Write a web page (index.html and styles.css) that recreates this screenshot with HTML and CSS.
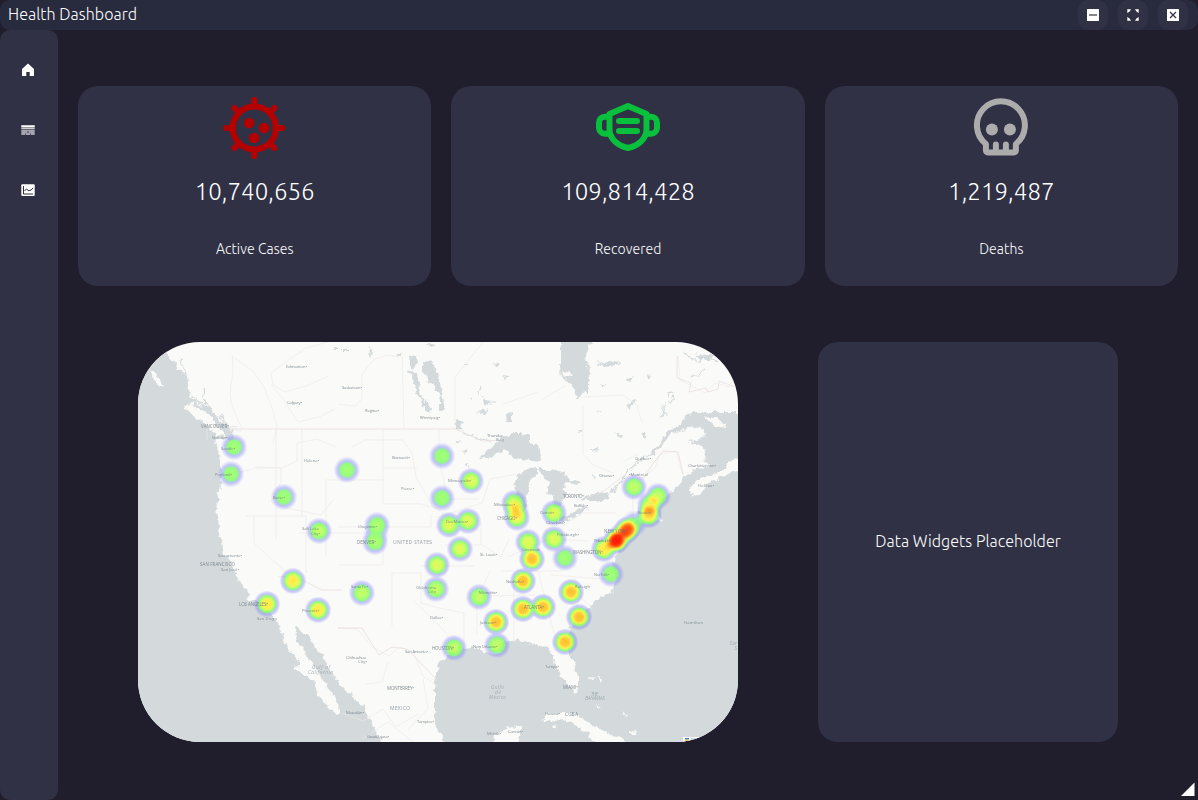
FILE: index.html
```html
<!DOCTYPE html>
<html lang="en">
<head>
<meta charset="utf-8">
<title>Health Dashboard</title>
<link rel="stylesheet" href="styles.css">
</head>
<body>
<header class="titlebar">
  <h1 class="title">Health Dashboard</h1>
  <div class="controls">
    <button class="control" aria-label="Minimize"><svg width="12" height="12" viewBox="0 0 12 12"><rect width="12" height="12" rx=".6" fill="#fff"/><path d="M2 6h8" stroke="#85868f" stroke-width="2"/></svg></button>
    <button class="control" aria-label="Maximize"><svg width="12" height="12" viewBox="0 0 12 12" fill="#fff"><path d="M.3.3H4L2.800 2.200 2.200 2.800.3 4zM11.700.3H8l1.200 1.900.6.6L11.700 4zM.3 11.700H4L2.800 9.800 2.200 9.200.3 8zM11.700 11.700H8l1.200-1.900.6-.6L11.700 8z"/></svg></button>
    <button class="control" aria-label="Close"><svg width="12" height="12" viewBox="0 0 12 12"><rect width="12" height="12" rx=".6" fill="#fff"/><path d="M3 3l6 6M9 3L3 9" stroke="#33344a" stroke-width="1.300"/></svg></button>
  </div>
</header>
<div class="body">
  <nav class="sidebar">
    <a class="nav"><svg width="14" height="14" viewBox="0 0 14 14"><path d="M7 .5L13 6v7H8.700V9H5.300v4H1V6z" fill="#fff"/></svg></a>
    <a class="nav"><svg width="14" height="14" viewBox="0 0 14 14"><path d="M.3 2.300h13.400v2.200H.3zM.3 5.300h13.400v1H.3z" fill="#fff"/><path d="M.3 7h13.400v5H.3z" fill="#a3a4ae"/><path d="M4 10.500h1V12H4zM9 10.500h1V12H9zM6.200 8.200h1.600v1.500H6.200z" fill="#4c4d5e"/></svg></a>
    <a class="nav"><svg width="14" height="14" viewBox="0 0 14 14" fill="none"><rect x=".3" y="1.300" width="13.400" height="11.600" rx="1" fill="#fff"/><path d="M2.500 3v8H12M3.500 8l2-2 2.500 2 1-1.200.8.600L12 5" stroke="#303145" stroke-width="1"/></svg></a>
  </nav>
  <main class="content">
    <section class="cards">
      <article class="card">
        <svg class="card-icon" viewBox="0 0 72 72"><g transform="translate(-.7)"><g fill="none" stroke="#b40000" stroke-width="6" stroke-linecap="round"><circle cx="36" cy="36" r="21.500"/><path d="M36 14V8M36 58v6M14 36H8M58 36h6M20.500 20.500L16 16M51.500 20.500L56 16M20.500 51.500L16 56M51.500 51.500L56 56"/></g><g fill="#b40000"><circle cx="30.800" cy="31" r="5.200"/><circle cx="45.800" cy="36" r="5.200"/><circle cx="35.800" cy="46" r="5.200"/></g></g></svg>
        <p class="value">10,740,656</p>
        <p class="label">Active Cases</p>
      </article>
      <article class="card">
        <svg class="card-icon" viewBox="0 0 72 72"><g fill="none" stroke="#08c03c" stroke-width="6" stroke-linecap="round" stroke-linejoin="round"><path d="M36 14L54.500 22V37C54.500 46.500 47 53.500 36 56 25 53.500 17.500 46.500 17.500 37V22z"/><path d="M57 24.700h2a6 6 0 0 1 6 6v5a6 6 0 0 1-6 6h-4M15 24.700h-2a6 6 0 0 0-6 6v5a6 6 0 0 0 6 6h4M27 29h18M27 39h18"/></g></svg>
        <p class="value">109,814,428</p>
        <p class="label">Recovered</p>
      </article>
      <article class="card">
        <svg class="card-icon" viewBox="0 0 72 72"><g transform="translate(.4 .5)"><g fill="none" stroke="#acacac" stroke-width="6" stroke-linecap="round" stroke-linejoin="round"><path d="M20.500 58v-6.500a24 24 0 1 1 30 0V58a2 2 0 0 1-2 2h-26a2 2 0 0 1-2-2z"/><path d="M30.500 52v7M40.500 52v7"/></g><g fill="#acacac"><circle cx="26.500" cy="37" r="6"/><circle cx="44.500" cy="37" r="6"/></g></g></svg>
        <p class="value">1,219,487</p>
        <p class="label">Deaths</p>
      </article>
    </section>
    <section class="lower">
      <svg class="map" viewBox="0 0 600 400" role="img" aria-label="Heat map of cases in the United States">
        <defs>
          <radialGradient id="spot"><stop offset="0" stop-color="#000"/><stop offset=".31" stop-color="#000" stop-opacity=".95"/><stop offset=".46" stop-color="#000" stop-opacity=".83"/><stop offset=".62" stop-color="#000" stop-opacity=".53"/><stop offset=".78" stop-color="#000" stop-opacity=".2"/><stop offset="1" stop-color="#000" stop-opacity="0"/></radialGradient>
          <filter id="coast" filterUnits="userSpaceOnUse" x="-12" y="-12" width="624" height="424" color-interpolation-filters="sRGB">
            <feTurbulence type="fractalNoise" baseFrequency=".16" numOctaves="3" seed="4"/>
            <feDisplacementMap in="SourceGraphic" scale="7" xChannelSelector="R" yChannelSelector="G"/>
          </filter>
          <filter id="heat" filterUnits="userSpaceOnUse" x="0" y="0" width="600" height="400" color-interpolation-filters="sRGB">
            <feColorMatrix values="0 0 0 1 0  0 0 0 1 0  0 0 0 1 0  0 0 0 1 0"/>
            <feComponentTransfer>
              <feFuncR type="table" tableValues=".45 .45 .5 .48 .57 .8 1 1 1 1 1"/>
              <feFuncG type="table" tableValues=".45 .45 .6 .98 1 1 .93 .74 .5 .2 0"/>
              <feFuncB type="table" tableValues="1 1 .9 .45 .38 .3 .22 .14 .08 .03 0"/>
              <feFuncA type="table" tableValues="0 .35 .5 .82 .86 .88 .9 .93 .95 .98 1"/>
            </feComponentTransfer>
          </filter>
          <circle id="s" r="13.500" fill="url(#spot)"/>
        </defs>
        <rect width="600" height="400" fill="#fafaf8"/>
        <g class="water" filter="url(#coast)">
          <path d="M-12 -12H12L20 12 27 9 31 17 37 20 41 28 49 35 51 47 52 56 61 63 73 66 79 77 89 83 94 90 96 100 89 96 76 97 80 108 83 123 82 140 79 165 81 185 80 190 84 200 86 213 93 220 98 232 101 240 109 248 111 257 121 260 130 270 138 278 143 290 149 305 163 320 163 324 156 325 170 335 179 345 180 354 188 362 198 372 202 370 200 362 190 345 182 332 178 327 172 320 165 307 160 300 157 285 165 290 171 293 176 306 185 312 190 325 200 340 207 347 225 364 233 380 242 397 246 412H-12z"/>
          <path d="M300 320L307 317 315 308 325 307 335 306 350 310 355 313 365 310 357 303 366 300 380 298 390 300 403 304 410 305 416 314 420 330 430 343 437 351 440 347 440 335 436 322 430 310 429 296 432 285 440 277 449 266 457 260 465 253 473 251 477 243 478 232 475 222 480 210 482 194 490 181 508 178 523 180 518 168 524 158 533 150 540 145 545 136 553 130 563 127 575 124 567 119 565 105 555 100 562 96 568 92 565 86 550 85 533 92 520 108 516 113 514 109 530 90 543 82 546 74 556 70H612V412H377L383 387 379 384 365 388 356 392 355 412H309L304 393 297 384V340z"/>
          <path d="M422 -10V25L424 35 433 42 437 50 441 57 445 50 450 52 450 42 452 32 448 15 449 8 455 0V-10zM342 116L350 108 362 98 375 91 384 91 391 94 391 100 400 103 404 113 402 120 385 118 373 115 371 109 362 110 350 116zM375 143L382 131 392 126 400 125 400 132 392 138 389 150 388 165 383 175 377 172 376 155 379 145zM400 127L413 127 425 130 433 138 442 141 437 143 430 140 425 145 428 152 423 165 417 165 416 153 408 152 412 141 403 131zM420 176L435 170 450 163 447 168 438 175 425 180zM443 158L452 152 462 152 471 150 470 156 460 159 447 159zM285 20L293 19 298 27 302 40 304 50 307 67 302 68 302 55 297 45 288 37 285 30zM270 30L279 31 281 48 287 60 293 66 292 71 287 68 284 59 279 50 277 40zM271 14L277 13 279 22 275 29zM368 71L374 70V80L369 81zM317 80L325 79 324 87 317 88zM460 22L470 20 483 21 478 24 465 25zM489 65L497 57 499 58 490 67zM558 12L566 15 576 10 572 18 562 18zM232 4l3 6-4 5zM195 8l4-4v4z"/>
          <path d="M205 7h4v3h-4zM230 11l4 2-2 4zM258 12h5l-2 3zM289 2h7l-2 3zM326 21h3l-1 3zM355 20l7 2-4 2zM366 33l5 1-3 2zM332 57h3v3zM344 51l4 9 7 1-8 2zM337 70l13-2-4 4zM317 99l7 1-6 2zM323 109l6-3-3 6zM329 122h3l-2 3zM459 69h5l-2 3zM462 41h4l-1 4zM439 88h7l-4 3zM478 92h7l-2 4zM503 92h5l-2 3zM454 107h5l-1 4zM525 62l-2 14 3-2zM488 36l7-1-2 4zM510 31l4 3-3 3zM453 132l6 4-2 2zM432 371l3-2 1 4z"/>
          <g class="lake-line"><path d="M27 10l8 19 8 3-4 8 13 9-4 8 19 4-2-14M52 52l16 15-1-9 11 19 7-3 4 11 9 0M35 25l12 7-5-16M43 42l8-4M271 30l7 2 3 12M341 52l1-8M347 60l10 0M340 69l10-1M319 77l6 15 9 2 19 5M547 12l13 8 9-5 10 4M553 36l15-8M528 73l-2-14M530 55a3 3 0 1 1 5 0 3 3 0 1 1-5 0M460 20l10 2 11-1M470 155l13-16 17-20 17-9M542 142l9-7M568 128l22-17 10 1M550 100l17 1"/></g>
          <g class="land">
            <path d="M47 63L54 61 63 68 72 71 77 84 87 90 87 94 79 93 72 88 60 77 51 71zM13 27L19 34 24 42 26 46 18 42 15 34zM567 75L576 76 588 83 589 86 580 85 570 80zM424 30L430 29 435 34 433 36 426 34z"/>
            <path d="M552 147L556 155 564 150 570 142 582 136 593 130 612 128V113L591 120 588 128 579 130 570 134 557 139zM405 379L408 374 415 370 428 370 440 374 452 380 459 386 468 389 475 394 487 397 486 410H466L456 399 450 390 440 386 435 381 423 376 413 379zM355 410L358 392 369 387 383 385 383 390 378 410zM416 382l4 2-2 3-3-2zM492 390l7-1-2 3-5 0zM449 337l9-2-3 3zM459 334l5 3-1 4zM458 361l3 2-1 2zM484 370l4 3-2 1z"/>
          </g>
        </g>
        <path class="road" d="M94 13q2 13-1 30t7 35-7 7M95 15l20 14 12 18 8 22 4 16-4 17M190 0l-22 6-19 13-16 12 2 12 12 7 24-7 19-9M133 43l13 15 14 22 21-5 16-8M198 105l-19-8-20 4 0 18-15 7-27-1M90 145l13-15 15-4 25 0 0 14-10 20 20 7 30 6 12-15M138 87v110M164 87v88M69 98V80M200 62l17 2 7-7 0-25 12-15 14-4 10 2M264 10L266 87M317 87V35L345 0M245 88V162M245 126h34M245 162h38l18 5M188 138h57M188 138v76M200 185h45v38H200M108 174h60v57M116 174v27l35 32M161 191h84M245 185h48v-12M254 231v53M200 286l19 1 15 18 17 9 10-9 14 4 10 25 15 10M254 231h29v30l18 5 25 5v36M283 224h53M292 257l13-4M275 258l29 28 17 24M300 175l44-14 8-24 28-5M307 157h34M307 203h36M343 180v22l20 13 8-18M352 229l-13 29 0 34M364 229h60M376 229v70M400 229l16 62M350 254l47-1M370 215l41-18 39 2M423 185l22-14 33 0M413 233l53 4M428 239l27 29M444 250l-13 35M445 64v48l9 10 22 10M445 55l40-2 14 10 5 18M485 120l15-8M495 135l0 43M498 140l19-14 5-14 16-3 7 25M540 14l2 24 25 13 10-10 15 4M403 58l24-14M365 62l35-12M214 105l13-7 38 0 9 13 4 24M301 88v30l7 30M278 135l17 30 23 14M285 337l5 30-20 20M205 371l20 8 20-12 13 18 22-13M224 397l26-17 25 20M250 320l-6 20-17 2"/>
        <path class="border" d="M91 87H317L345 99 365 98M140 235l16-1 28 14h20M157 235l-1 13M200 286l24 0 17 27 13-8 15 2 31 32M539 14v22l14 5-2 9 17-4 2 4 10-3 1-8 19 7M505 137l9-14 11-14 15 1 5 22M444 158l22-9 23-18"/>
        <g filter="url(#heat)">
          <g opacity=".41"><use href="#s" x="96" y="105"/><use href="#s" x="93" y="132"/><use href="#s" x="146" y="155"/><use href="#s" x="209" y="128"/><use href="#s" x="304" y="114"/><use href="#s" x="304" y="156"/><use href="#s" x="427" y="216"/><use href="#s" x="473" y="232"/></g>
          <g opacity=".48"><use href="#s" x="181" y="189"/><use href="#s" x="224" y="251"/><use href="#s" x="298" y="247"/><use href="#s" x="341" y="255"/><use href="#s" x="359" y="303"/><use href="#s" x="316" y="306"/><use href="#s" x="496" y="145"/></g>
          <g opacity=".43"><use href="#s" x="239" y="183"/><use href="#s" x="237" y="200"/><use href="#s" x="238" y="192" opacity=".35"/></g>
          <g opacity=".54"><use href="#s" x="333" y="139"/><use href="#s" x="311" y="183"/><use href="#s" x="330" y="179"/><use href="#s" x="322" y="207"/><use href="#s" x="299" y="223"/><use href="#s" x="416" y="171"/><use href="#s" x="416" y="197"/><use href="#s" x="390" y="200"/></g>
          <use href="#s" x="520" y="154" opacity=".47"/>
          <g opacity=".62"><use href="#s" x="155" y="239"/><use href="#s" x="129" y="262"/><use href="#s" x="180" y="268"/></g>
          <use href="#s" x="376" y="161" opacity=".5"/><use href="#s" x="379" y="176" opacity=".52"/><use href="#s" x="378" y="169" opacity=".3"/>
          <g opacity=".71"><use href="#s" x="394" y="217"/><use href="#s" x="385" y="239"/><use href="#s" x="385" y="267"/><use href="#s" x="405" y="265"/><use href="#s" x="358" y="280"/><use href="#s" x="433" y="250"/><use href="#s" x="441" y="275"/><use href="#s" x="427" y="300"/></g>
          <use href="#s" x="511" y="173" opacity=".65"/><use href="#s" x="512" y="163" opacity=".5"/><use href="#s" x="466" y="207" opacity=".62"/><use href="#s" x="478" y="199" opacity=".95"/><use href="#s" x="489" y="188" opacity=".84"/><use href="#s" x="483" y="194" opacity=".4"/><use href="#s" x="496" y="182" opacity=".3"/>
        </g>
        <g class="places">
          <text x="148" y="26" textLength="21">Edmonton•</text><text x="149" y="61.500" textLength="15">Calgary•</text><text x="204" y="46.500" textLength="20">Saskatoon•</text><text x="227" y="69.500" textLength="14">Regina•</text><text x="282" y="77" textLength="20">Winnipeg•</text><text x="349" y="95" textLength="16">Thunder</text><text x="358" y="99" textLength="8">Bay</text>
          <text class="big" x="63" y="86" textLength="28">VANCOUVER•</text><text x="74" y="97" textLength="15">Victoria•</text><text x="83" y="107.500" textLength="14">Seattle•</text><text x="77" y="134" textLength="17">Portland•</text><text x="166" y="120" textLength="15">Helena•</text><text x="135" y="157" textLength="12">Boise•</text><text x="164" y="188" textLength="17">Salt Lake</text><text x="173" y="192.500" textLength="9">City•</text><text x="254" y="117" textLength="18">Bismarck•</text><text x="263" y="147.500" textLength="13">Pierre•</text><text x="310" y="140" textLength="23">Minneapolis•</text><text x="220" y="185.500" textLength="19">Cheyenne•</text><text class="big" x="219" y="202" textLength="19">DENVER•</text><text class="country" x="255" y="202" textLength="39">UNITED STATES</text>
          <text x="308" y="181" textLength="22">Des Moines•</text><text x="356" y="164" textLength="21">Milwaukee•</text><text class="big" x="359" y="177.500" textLength="20">CHICAGO•</text><text x="342" y="214" textLength="17">St. Louis•</text><text x="402" y="172" textLength="14">Detroit•</text><text x="408" y="182" textLength="19">Cleveland•</text><text x="384" y="209" textLength="18">Cincinnati</text><text x="368" y="241" textLength="18">Nashville•</text><text x="419" y="194" textLength="22">Pittsburgh•</text><text x="436" y="165" textLength="14">Buffalo•</text><text class="big" x="425" y="156" textLength="21">TORONTO•</text><text x="461" y="135" textLength="15">Ottawa•</text><text x="491" y="133.500" textLength="19">•Montréal</text><text x="497" y="118" textLength="16">Québec•</text><text x="550" y="125" textLength="28">Charlottetown•</text><text x="560" y="144.500" textLength="16">Halifax•</text><text x="500" y="172" textLength="13">Boston</text><text class="big" x="466" y="191" textLength="23">NEW YORK</text><text x="456" y="200" textLength="18">Philadelphia</text><text class="big" x="435" y="211.500" textLength="30">WASHINGTON•</text><text x="456" y="234" textLength="15">Norfolk•</text><text x="437" y="246" textLength="15">Raleigh</text>
          <text x="80" y="215" textLength="24">Sacramento•</text><text class="big" x="62" y="224" textLength="35">SAN FRANCISCO</text><text x="83" y="228.500" textLength="18">San José•</text><text class="big" x="101" y="264" textLength="29">LOS ANGELES•</text><text x="119" y="278" textLength="20">San Diego</text><text x="164" y="270" textLength="17">Phoenix•</text><text x="213" y="246" textLength="17">Santa Fe•</text><text x="278" y="246.500" textLength="20">Oklahoma</text><text x="290" y="250.500" textLength="8">City</text><text x="341" y="252" textLength="18">Memphis•</text><text x="292" y="277" textLength="13">Dallas•</text><text x="342" y="282" textLength="16">Jackson•</text><text class="big" x="386" y="267" textLength="20">ATLANTA•</text><text class="big" x="294" y="308" textLength="22">HOUSTON•</text><text x="267" y="311" textLength="23">San Antonio•</text><text x="335" y="305.500" textLength="24">New Orleans•</text><text x="208" y="317" textLength="20">Chihuahua</text><text x="220" y="321" textLength="9">City•</text><text class="big" x="249" y="348" textLength="27">MONTERREY•</text><text class="country" x="252" y="367.500" textLength="20">MEXICO</text><text x="208" y="371.500" textLength="18">Mazatlán•</text><text x="279" y="381" textLength="17">Tampico•</text><text x="229" y="395.500" textLength="22">Guadalajara•</text><text x="349" y="392.500" textLength="14">Mérida•</text><text x="370" y="391" textLength="15">Cancún•</text><text x="407" y="326" textLength="14">Tampa•</text><text class="big" x="425" y="346.500" textLength="15">MIAMI•</text><text x="407" y="372.500" textLength="15">Havana•</text><text class="big" x="427" y="373.500" textLength="13">CUBA</text><text class="sea" x="453" y="354" textLength="7">THE</text><text class="sea" x="447" y="358" textLength="20">BAHAMAS</text><text x="546" y="282" textLength="19">Hamilton</text><text class="sea" x="591.500" y="303" textLength="7.500">Sar</text><text class="sea" x="596.500" y="308">S</text>
          <text class="sea" x="174" y="327" textLength="18">Gulf of</text><text class="sea" x="170" y="332" textLength="25">California</text><text class="sea" x="353" y="347" textLength="13">Golfo</text><text class="sea" x="357" y="351.500" textLength="6">de</text><text class="sea" x="351" y="356.500" textLength="17">México</text>
        </g>
        <path d="M545 395h16l-7 5h-9z" fill="#fff"/><path d="M547 396h4v1.500h-4z" fill="#3a78c2"/><path d="M547 397.500h4v1.500h-4z" fill="#e9cb55"/><path d="M553 397h5" stroke="#80b6d4"/>
      </svg>
      <div class="placeholder">Data Widgets Placeholder</div>
    </section>
  </main>
</div>
<svg class="grip" width="14" height="14" viewBox="0 0 14 14"><path d="M0 14L13.500.5V14z" fill="#fff"/></svg>
</body>
</html>
```

FILE: styles.css
```css
* { box-sizing: border-box; }
body {
  margin: 0;
  height: 800px;
  display: flex;
  flex-direction: column;
  overflow: hidden;
  background: #201e2d;
  color: #fff;
  font-family: Ubuntu, "Noto Sans", sans-serif;
}
.titlebar {
  height: 30px;
  flex: none;
  display: flex;
  align-items: center;
  justify-content: space-between;
  padding: 0 10px 0 8px;
  background: #282a3e;
  border-radius: 10px;
}
.title {
  margin: 0;
  font-size: 16px;
  font-weight: 300;
  line-height: 28px;
  padding-bottom: 2px;
  letter-spacing: .07px;
}
.controls { display: flex; gap: 10px; }
.control {
  width: 30px;
  height: 30px;
  padding: 0;
  border: 0;
  border-radius: 10px;
  background: #303145;
  display: grid;
  place-items: center;
}
.body { flex: 1; display: flex; min-height: 0; }
.sidebar {
  width: 58px;
  flex: none;
  padding: 10px 0 0 0;
  background: #303145;
  border-radius: 10px;
}
.nav { display: grid; place-items: center; width: 56px; height: 60px; }
.content {
  flex: 1;
  display: flex;
  flex-direction: column;
  gap: 56px;
  padding: 56px 20px 0;
}
.cards { display: grid; grid-template-columns: repeat(3, 1fr); gap: 20px; height: 200px; }
.card {
  display: flex;
  flex-direction: column;
  align-items: center;
  padding-top: 6px;
  background: #303145;
  border-radius: 20px;
}
.card-icon { width: 72px; height: 72px; flex: none; }
.value {
  margin: 11px 0 0;
  font-size: 24px;
  font-weight: 300;
  line-height: 34px;
  letter-spacing: .04px;
}
.label {
  margin: 30px 0 0;
  font-size: 14px;
  font-weight: 300;
  line-height: 20px;
  letter-spacing: .06px;
}
.lower { display: flex; justify-content: space-between; padding: 0 60px; }
.map { width: 600px; height: 400px; border-radius: 62px; display: block; }
.placeholder {
  width: 300px;
  height: 400px;
  display: grid;
  place-items: center;
  padding-bottom: 2px;
  background: #303145;
  border-radius: 20px;
  font-size: 16px;
  font-weight: 300;
  letter-spacing: .07px;
}
.grip { position: absolute; right: 3px; bottom: 4px; }
.water { fill: #d4dadc; }
.lake-line { fill: none; stroke: #d4dadc; stroke-width: 1.2; }
.land { fill: #fafaf8; }
.road { fill: none; stroke: #ede9e8; stroke-width: .6; }
.border { fill: none; stroke: #eadede; stroke-width: .8; }
.places { font-family: "Open Sans", sans-serif; font-size: 4.1px; fill: #6d7a84; fill-opacity: .85; }
.big { font-size: 4.5px; }
.country { font-size: 5px; fill: #85909b; }
.sea { font-size: 4.8px; font-style: italic; fill: #98a4ac; }
```
